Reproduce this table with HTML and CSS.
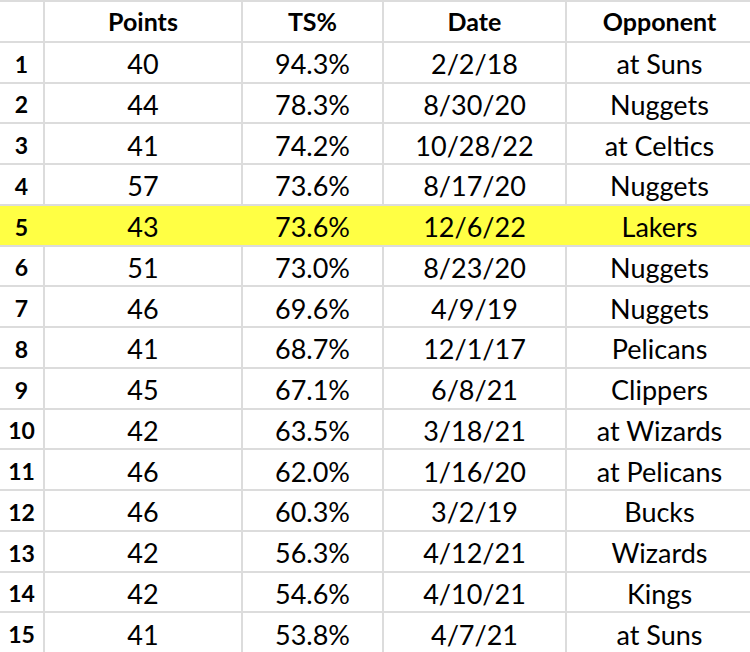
FILE: index.html
```
<!DOCTYPE html>
<html>
<head>
<meta charset="utf-8">
<link rel="stylesheet" href="styles.css">
</head>
<body>
<div class="sheet">
  <div class="row head"><div class="c rank"></div><div class="c">Points</div><div class="c">TS%</div><div class="c">Date</div><div class="c">Opponent</div></div>
  <div class="row"><div class="c rank">1</div><div class="c">40</div><div class="c">94.3%</div><div class="c">2/2/18</div><div class="c">at Suns</div></div>
  <div class="row"><div class="c rank">2</div><div class="c">44</div><div class="c">78.3%</div><div class="c">8/30/20</div><div class="c">Nuggets</div></div>
  <div class="row"><div class="c rank">3</div><div class="c">41</div><div class="c">74.2%</div><div class="c">10/28/22</div><div class="c">at Celtics</div></div>
  <div class="row"><div class="c rank">4</div><div class="c">57</div><div class="c">73.6%</div><div class="c">8/17/20</div><div class="c">Nuggets</div></div>
  <div class="row hl"><div class="c rank">5</div><div class="c">43</div><div class="c">73.6%</div><div class="c">12/6/22</div><div class="c">Lakers</div></div>
  <div class="row"><div class="c rank">6</div><div class="c">51</div><div class="c">73.0%</div><div class="c">8/23/20</div><div class="c">Nuggets</div></div>
  <div class="row"><div class="c rank">7</div><div class="c">46</div><div class="c">69.6%</div><div class="c">4/9/19</div><div class="c">Nuggets</div></div>
  <div class="row"><div class="c rank">8</div><div class="c">41</div><div class="c">68.7%</div><div class="c">12/1/17</div><div class="c">Pelicans</div></div>
  <div class="row"><div class="c rank">9</div><div class="c">45</div><div class="c">67.1%</div><div class="c">6/8/21</div><div class="c">Clippers</div></div>
  <div class="row"><div class="c rank">10</div><div class="c">42</div><div class="c">63.5%</div><div class="c">3/18/21</div><div class="c">at Wizards</div></div>
  <div class="row"><div class="c rank">11</div><div class="c">46</div><div class="c">62.0%</div><div class="c">1/16/20</div><div class="c">at Pelicans</div></div>
  <div class="row"><div class="c rank">12</div><div class="c">46</div><div class="c">60.3%</div><div class="c">3/2/19</div><div class="c">Bucks</div></div>
  <div class="row"><div class="c rank">13</div><div class="c">42</div><div class="c">56.3%</div><div class="c">4/12/21</div><div class="c">Wizards</div></div>
  <div class="row"><div class="c rank">14</div><div class="c">42</div><div class="c">54.6%</div><div class="c">4/10/21</div><div class="c">Kings</div></div>
  <div class="row"><div class="c rank">15</div><div class="c">41</div><div class="c">53.8%</div><div class="c">4/7/21</div><div class="c">at Suns</div></div>
</div>
</body>
</html>
```
FILE: styles.css
```
html, body {
  margin: 0;
  padding: 0;
  background: #ffffff;
  overflow: hidden;
}
.sheet {
  width: 750px;
  height: 652px;
  overflow: hidden;
  font-family: Lato, "Open Sans", sans-serif;
  color: #000;
}
.row {
  display: grid;
  grid-template-columns: 43px 198px 141px 183px 187px;
  height: 40.75px;
  box-sizing: border-box;
  border-top: 2px solid #dcdcdc;
}
.c {
  display: flex;
  align-items: center;
  justify-content: center;
  border-left: 2px solid #dcdcdc;
  font-size: 27px;
  padding-top: 3px;
  box-sizing: border-box;
  white-space: nowrap;
}
.c.rank {
  border-left: none;
  font-weight: 700;
  font-size: 23px;
}
.head .c {
  font-weight: 700;
  font-size: 25px;
  padding-top: 0;
}
.row.hl {
  background: #ffff44;
}
.row.hl .c {
  border-left-color: #ffff44;
}
```
